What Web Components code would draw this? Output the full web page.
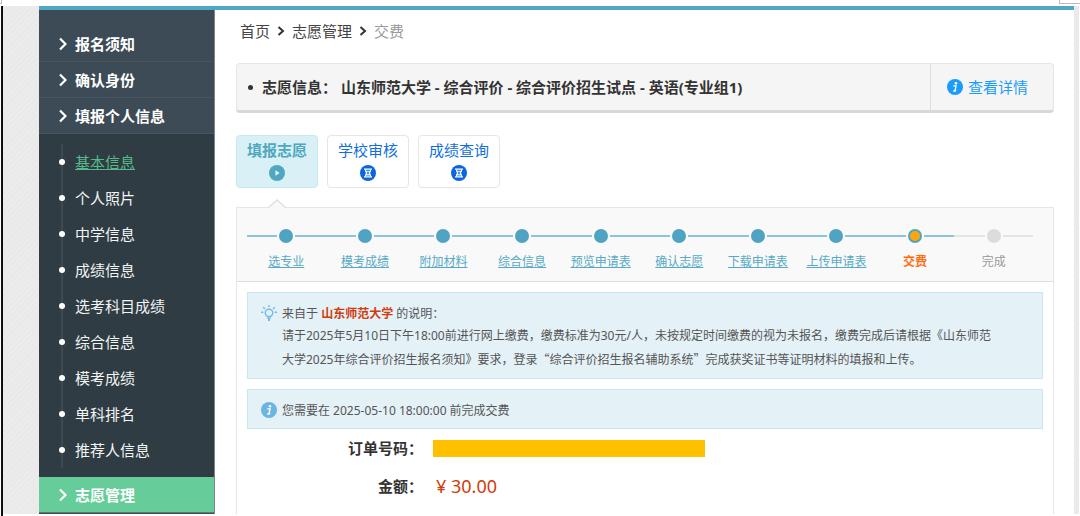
<!DOCTYPE html>
<html lang="zh-CN">
<head>
<meta charset="UTF-8">
<meta name="viewport" content="width=device-width, initial-scale=1">
<title>志愿管理 - 交费</title>
<style>
  body {
    margin: 0;
    background: #fff;
    color: #444;
    font-family: 'Noto Sans', 'Noto Sans CJK SC', sans-serif;
    font-size: 15px;
    line-height: 22px;
    --teal: #4fa8c3;
    --line: #e6e6e6;
  }

  /* full-width Chinese quotation marks */
  q {
    quotes: none;
    font-family: 'Noto Sans CJK SC', sans-serif;
  }
</style>
</head>
<body>
<page-shell>
  <side-menu slot="side">
    <menu-head>报名须知</menu-head>
    <menu-head>确认身份</menu-head>
    <menu-head>填报个人信息</menu-head>
    <sub-menu>
      <sub-item current>基本信息</sub-item>
      <sub-item>个人照片</sub-item>
      <sub-item>中学信息</sub-item>
      <sub-item>成绩信息</sub-item>
      <sub-item>选考科目成绩</sub-item>
      <sub-item>综合信息</sub-item>
      <sub-item>模考成绩</sub-item>
      <sub-item>单科排名</sub-item>
      <sub-item>推荐人信息</sub-item>
    </sub-menu>
    <menu-head active>志愿管理</menu-head>
  </side-menu>

  <bread-crumb></bread-crumb>
  <wish-bar>志愿信息： 山东师范大学 - 综合评价 - 综合评价招生试点 - 英语(专业组1)</wish-bar>
  <tab-row>
    <tab-card active icon="play">填报志愿</tab-card>
    <tab-card icon="wait">学校审核</tab-card>
    <tab-card icon="wait">成绩查询</tab-card>
  </tab-row>
  <step-panel>
    <step-item slot="steps" state="done">选专业</step-item>
    <step-item slot="steps" state="done">模考成绩</step-item>
    <step-item slot="steps" state="done">附加材料</step-item>
    <step-item slot="steps" state="done">综合信息</step-item>
    <step-item slot="steps" state="done">预览申请表</step-item>
    <step-item slot="steps" state="done">确认志愿</step-item>
    <step-item slot="steps" state="done">下载申请表</step-item>
    <step-item slot="steps" state="done">上传申请表</step-item>
    <step-item slot="steps" state="now">交费</step-item>
    <step-item slot="steps" state="todo">完成</step-item>

    <note-box icon="bulb">
      <span slot="title">来自于 <b style="color: #d03c0c">山东师范大学</b> 的说明：</span>
      请于2025年5月10日下午18:00前进行网上缴费，缴费标准为30元/人，未按规定时间缴费的视为未报名，缴费完成后请根据《山东师范<br>大学2025年综合评价招生报名须知》要求，登录<q>“综合评价招生报名辅助系统”</q>完成获奖证书等证明材料的填报和上传。
    </note-box>
    <note-box icon="info">
      <span slot="title">您需要在 2025-05-10 18:00:00 前完成交费</span>
    </note-box>
    <order-info amount="30.00"></order-info>
  </step-panel>
</page-shell>

<script>
const infoIcon = `
  <svg viewBox="0 0 16 16" width="16" height="16" aria-hidden="true">
    <circle cx="8" cy="8" r="8" fill="currentColor"/>
    <circle cx="9" cy="4.2" r="1.3" fill="#fff"/>
    <path d="M6.2 6.8h2.9L8 11.4h1.2M6.2 12h2.6" fill="none" stroke="#fff" stroke-width="1.3"/>
  </svg>`;

const bulbIcon = `
  <svg viewBox="0 0 16 16" width="16" height="16" aria-hidden="true" fill="none" stroke="#74bce8" stroke-width="1.4">
    <path d="M6.3 11.4C4.8 10.5 4.2 9.5 4.2 8a3.8 3.8 0 0 1 7.6 0c0 1.500-.6 2.500-2.100 3.400z"/>
    <path d="M6.300 13.200h3.400M7 15h2" stroke-width="1.800"/>
    <path d="M8 0v2.200M2.200 2.200l1.700 1.700M13.800 2.200l-1.700 1.700M0 7.300h2.300M13.700 7.300H16"/>
  </svg>`;

const playIcon = `
  <svg viewBox="0 0 16 16" width="16" height="16" aria-hidden="true">
    <circle cx="8" cy="8" r="8" fill="#4fa8c0"/>
    <path d="M6.500 5.200v5.600L10.500 8z" fill="#e8f8fb"/>
  </svg>`;

const waitIcon = `
  <svg viewBox="0 0 16 16" width="16" height="16" aria-hidden="true">
    <circle cx="8" cy="8" r="8" fill="#0a66e0"/>
    <path d="M4 4.200h8M4 11.800h8" stroke="#fff" stroke-width="1.300"/>
    <path d="M5.400 4.500c0 2 .4 2.700 1.500 3.500-1.100.8-1.500 1.500-1.500 3.500M10.600 4.500c0 2-.4 2.700-1.500 3.500 1.100.8 1.500 1.500 1.500 3.500M6 6.300h4M6 9.900h4" fill="none" stroke="#fff" stroke-width="1.100"/>
  </svg>`;

// Shared base: puts the element's markup in an open shadow root
class BaseElement extends HTMLElement {
  constructor() {
    super();
    this.attachShadow({ mode: 'open' });
  }

  connectedCallback() {
    const template = document.createElement('template');
    template.innerHTML = this.render();
    this.shadowRoot.replaceChildren(template.content.cloneNode(true));
  }
}

class PageShell extends BaseElement {
  render() {
    return `
      <style>
        :host {
          display: flex;
          flex-direction: column;
          box-sizing: border-box;
          position: relative;
          min-height: 100vh;
          padding: 6px 0 0 1px;
        }
        .frame {
          flex: 1;
          display: flex;
          border-left: 2px solid #0c1012;
          padding: 0 1px 2px 0;
        }
        .paper {
          flex: 1;
          display: flex;
          min-width: 0;
          padding: 0 5px 0 36px;
          background: repeating-linear-gradient(135deg, #e9e9e9 0 2px, #ececec 2px 4px);
        }
        .panel {
          flex: 1;
          display: flex;
          min-width: 0;
          border-top: 4px solid var(--teal);
          background: #fff;
        }
        main {
          flex: 1;
          display: flex;
          flex-direction: column;
          min-width: 0;
          padding: 10px 20px 0 21px;
        }
        .corner {
          position: absolute;
          top: 0;
          right: 0;
          width: 20px;
          height: 3px;
          border: solid #bbb;
          border-width: 0 0 1px 1px;
        }
        .corner.left {
          right: auto;
          left: 0;
          width: 1px;
          border-width: 0 1px 1px 0;
        }
      </style>
      <div class="frame">
        <div class="paper">
          <div class="panel">
            <slot name="side"></slot>
            <main><slot></slot></main>
          </div>
        </div>
      </div>
      <div class="corner"></div>
      <div class="corner left"></div>
    `;
  }
}

class SideMenu extends BaseElement {
  render() {
    return `
      <style>
        :host {
          flex: none;
          box-sizing: border-box;
          width: 176px;
          padding-top: 16px;
          background: #3c4b55;
          border-right: 1px solid #7b868c;
        }
      </style>
      <nav><slot></slot></nav>
    `;
  }
}

class MenuHead extends BaseElement {
  render() {
    return `
      <style>
        :host {
          display: block;
          box-sizing: border-box;
          height: 36px;
          border-bottom: 1px solid #46555f;
        }
        :host([active]) { background: #66cc99; border-color: #5c7a72; }
        a {
          display: flex;
          align-items: center;
          gap: 8px;
          height: 36px;
          padding-left: 20px;
          color: #fff;
          font-weight: bold;
          text-decoration: none;
        }
      </style>
      <a href="#">
        <svg viewBox="0 0 8 14" width="8" height="14" aria-hidden="true">
          <path d="M1 1.500L6.500 7 1 12.500" fill="none" stroke="#fff" stroke-width="2.200"/>
        </svg>
        <span><slot></slot></span>
      </a>
    `;
  }
}

class SubMenu extends BaseElement {
  render() {
    return `
      <style>
        :host { display: block; padding: 10px 0 9px 22px; background: #2f3c43; }
        div { border-left: 2px solid #3d4a52; }
      </style>
      <div><slot></slot></div>
    `;
  }
}

class SubItem extends BaseElement {
  render() {
    return `
      <style>
        :host { display: block; margin-left: -4px; }
        a {
          display: flex;
          align-items: center;
          gap: 10px;
          height: 36px;
          color: #f2f4f5;
          text-decoration: none;
        }
        a::before {
          content: '';
          width: 6px;
          height: 6px;
          border-radius: 50%;
          background: #fff;
        }
        :host([current]) a { color: #56b98a; }
        :host([current]) span { text-decoration: underline; }
      </style>
      <a href="#"><span><slot></slot></span></a>
    `;
  }
}

class BreadCrumb extends BaseElement {
  render() {
    const arrow = `
      <svg viewBox="0 0 8 10" width="8" height="10" aria-hidden="true">
        <path d="M1.500 1L6 5 1.500 9" fill="none" stroke="#333" stroke-width="2"/>
      </svg>`;
    return `
      <style>
        :host { display: block; padding-left: 4px; }
        nav { display: flex; align-items: center; gap: 7px; }
        a { color: #444; text-decoration: none; }
        .here { color: #999; }
      </style>
      <nav>
        <a href="#">首页</a>${arrow}<a href="#">志愿管理</a>${arrow}<span class="here">交费</span>
      </nav>
    `;
  }
}

class WishBar extends BaseElement {
  render() {
    return `
      <style>
        :host {
          display: flex;
          align-items: stretch;
          height: 46px;
          margin-top: 21px;
          border: 1px solid var(--line);
          border-bottom: 3px solid #d8d8d8;
          border-radius: 4px;
          background: #f5f5f5;
        }
        .text {
          flex: 1;
          display: flex;
          align-items: center;
          gap: 9px;
          padding-left: 11px;
          color: #333;
          font-weight: bold;
        }
        .text::before {
          content: '';
          width: 5px;
          height: 5px;
          border-radius: 50%;
          background: #333;
        }
        a {
          display: flex;
          align-items: center;
          gap: 5px;
          box-sizing: border-box;
          width: 123px;
          padding-left: 16px;
          border-left: 1px solid #ddd;
          color: #1a9cff;
          text-decoration: none;
        }
      </style>
      <div class="text"><span><slot></slot></span></div>
      <a href="#">${infoIcon}<span>查看详情</span></a>
    `;
  }
}

class TabRow extends BaseElement {
  render() {
    return `
      <style>
        :host { display: flex; gap: 9px; margin-top: 22px; }
      </style>
      <slot></slot>
    `;
  }
}

class TabCard extends BaseElement {
  render() {
    return `
      <style>
        :host { display: block; }
        button {
          display: flex;
          flex-direction: column;
          align-items: center;
          gap: 4px;
          width: 82px;
          height: 53px;
          padding: 3px 0;
          border: 1px solid var(--line);
          border-radius: 4px;
          background: #fff;
          color: #0f6fe0;
          font: inherit;
          cursor: pointer;
        }
        :host([active]) button {
          border-color: #c5e9f0;
          background: #d9f1f6;
          color: #4fa8c0;
          font-weight: bold;
        }
      </style>
      <button type="button">
        <span><slot></slot></span>
        ${this.getAttribute('icon') === 'play' ? playIcon : waitIcon}
      </button>
    `;
  }
}

class StepPanel extends BaseElement {
  render() {
    return `
      <style>
        :host {
          flex: 1;
          position: relative;
          display: block;
          margin-top: 19px;
          border: solid var(--line);
          border-width: 1px 1px 0;
        }
        .pointer {
          position: absolute;
          top: -9px;
          left: 31px;
        }
        .steps {
          display: flex;
          height: 73px;
          padding: 0 20px 0 10px;
          border-bottom: 1px solid #dfdfdf;
          background: #f9f9f9;
        }
        .body { padding: 10px 10px 0; }
      </style>
      <svg class="pointer" viewBox="0 0 18 10" width="18" height="10" aria-hidden="true">
        <path d="M0 9.500L9 1l9 8.500V10H0z" fill="#f9f9f9"/>
        <path d="M0 9L9 1l9 8" fill="none" stroke="#e0e0e0" stroke-width="1.500"/>
      </svg>
      <div class="steps"><slot name="steps"></slot></div>
      <div class="body"><slot></slot></div>
    `;
  }
}

class StepItem extends BaseElement {
  render() {
    const state = this.getAttribute('state');
    const label = state === 'done' ? '<a href="#"><slot></slot></a>' : '<slot></slot>';
    return `
      <style>
        :host {
          flex: 1 1 0;
          display: flex;
          flex-direction: column;
          align-items: stretch;
          gap: 8px;
          min-width: 0;
          padding-top: 21px;
          color: #57aac6;
          font-size: 12px;
          line-height: 22px;
          text-align: center;
          white-space: nowrap;
          --track: #8cc4d9;
          --dot: #4fa3c3;
        }
        :host([state='now']) { color: #ff6d0d; font-weight: bold; }
        :host([state='todo']) { color: #999; --track: #e4e4e4; --dot: #dcdcdc; }
        .track { display: flex; align-items: center; gap: 2px; }
        .track::before, .track::after {
          content: '';
          flex: 1;
          height: 2px;
          background: var(--track);
        }
        i {
          box-sizing: border-box;
          width: 14px;
          height: 14px;
          border-radius: 50%;
          background: var(--dot);
        }
        :host([state='now']) i { border: 2px solid var(--dot); background: #ffa60a; }
        a { color: inherit; }
      </style>
      <div class="track"><i></i></div>
      <div>${label}</div>
    `;
  }
}

class NoteBox extends BaseElement {
  render() {
    const bulb = this.getAttribute('icon') === 'bulb';
    return `
      <style>
        :host {
          display: block;
          margin-bottom: 10px;
          padding: 9px 13px 7px;
          border: 1px solid #c8e8ef;
          background: #e4f1f7;
          color: #555;
          font-size: 12px;
          line-height: 23px;
        }
        .title {
          display: flex;
          align-items: center;
          gap: 5px;
          height: 22px;
          color: #6bb5e3;
        }
        .title slot { display: block; color: #555; }
        p { margin: 0 0 0 21px; }
      </style>
      <div class="title">${bulb ? bulbIcon : infoIcon}<slot name="title"></slot></div>
      ${bulb ? '<p><slot></slot></p>' : ''}
    `;
  }
}

class OrderInfo extends BaseElement {
  render() {
    return `
      <style>
        :host { display: block; margin-top: -2px; }
        dl {
          display: grid;
          grid-template-columns: 176px 1fr;
          align-items: center;
          gap: 16px 10px;
          margin: 0;
        }
        dt { color: #333; font-weight: bold; text-align: right; }
        dd { margin: 0; }
        .mask { max-width: 272px; height: 17px; background: #ffc000; }
        .price { color: #d03c0c; font-size: 18px; padding-left: 3px; }
      </style>
      <dl>
        <dt>订单号码：</dt>
        <dd><div class="mask"></div></dd>
        <dt>金额：</dt>
        <dd class="price">¥ ${this.getAttribute('amount')}</dd>
      </dl>
    `;
  }
}

window.customElements.define('page-shell', PageShell);
window.customElements.define('side-menu', SideMenu);
window.customElements.define('menu-head', MenuHead);
window.customElements.define('sub-menu', SubMenu);
window.customElements.define('sub-item', SubItem);
window.customElements.define('bread-crumb', BreadCrumb);
window.customElements.define('wish-bar', WishBar);
window.customElements.define('tab-row', TabRow);
window.customElements.define('tab-card', TabCard);
window.customElements.define('step-panel', StepPanel);
window.customElements.define('step-item', StepItem);
window.customElements.define('note-box', NoteBox);
window.customElements.define('order-info', OrderInfo);
</script>
</body>
</html>
